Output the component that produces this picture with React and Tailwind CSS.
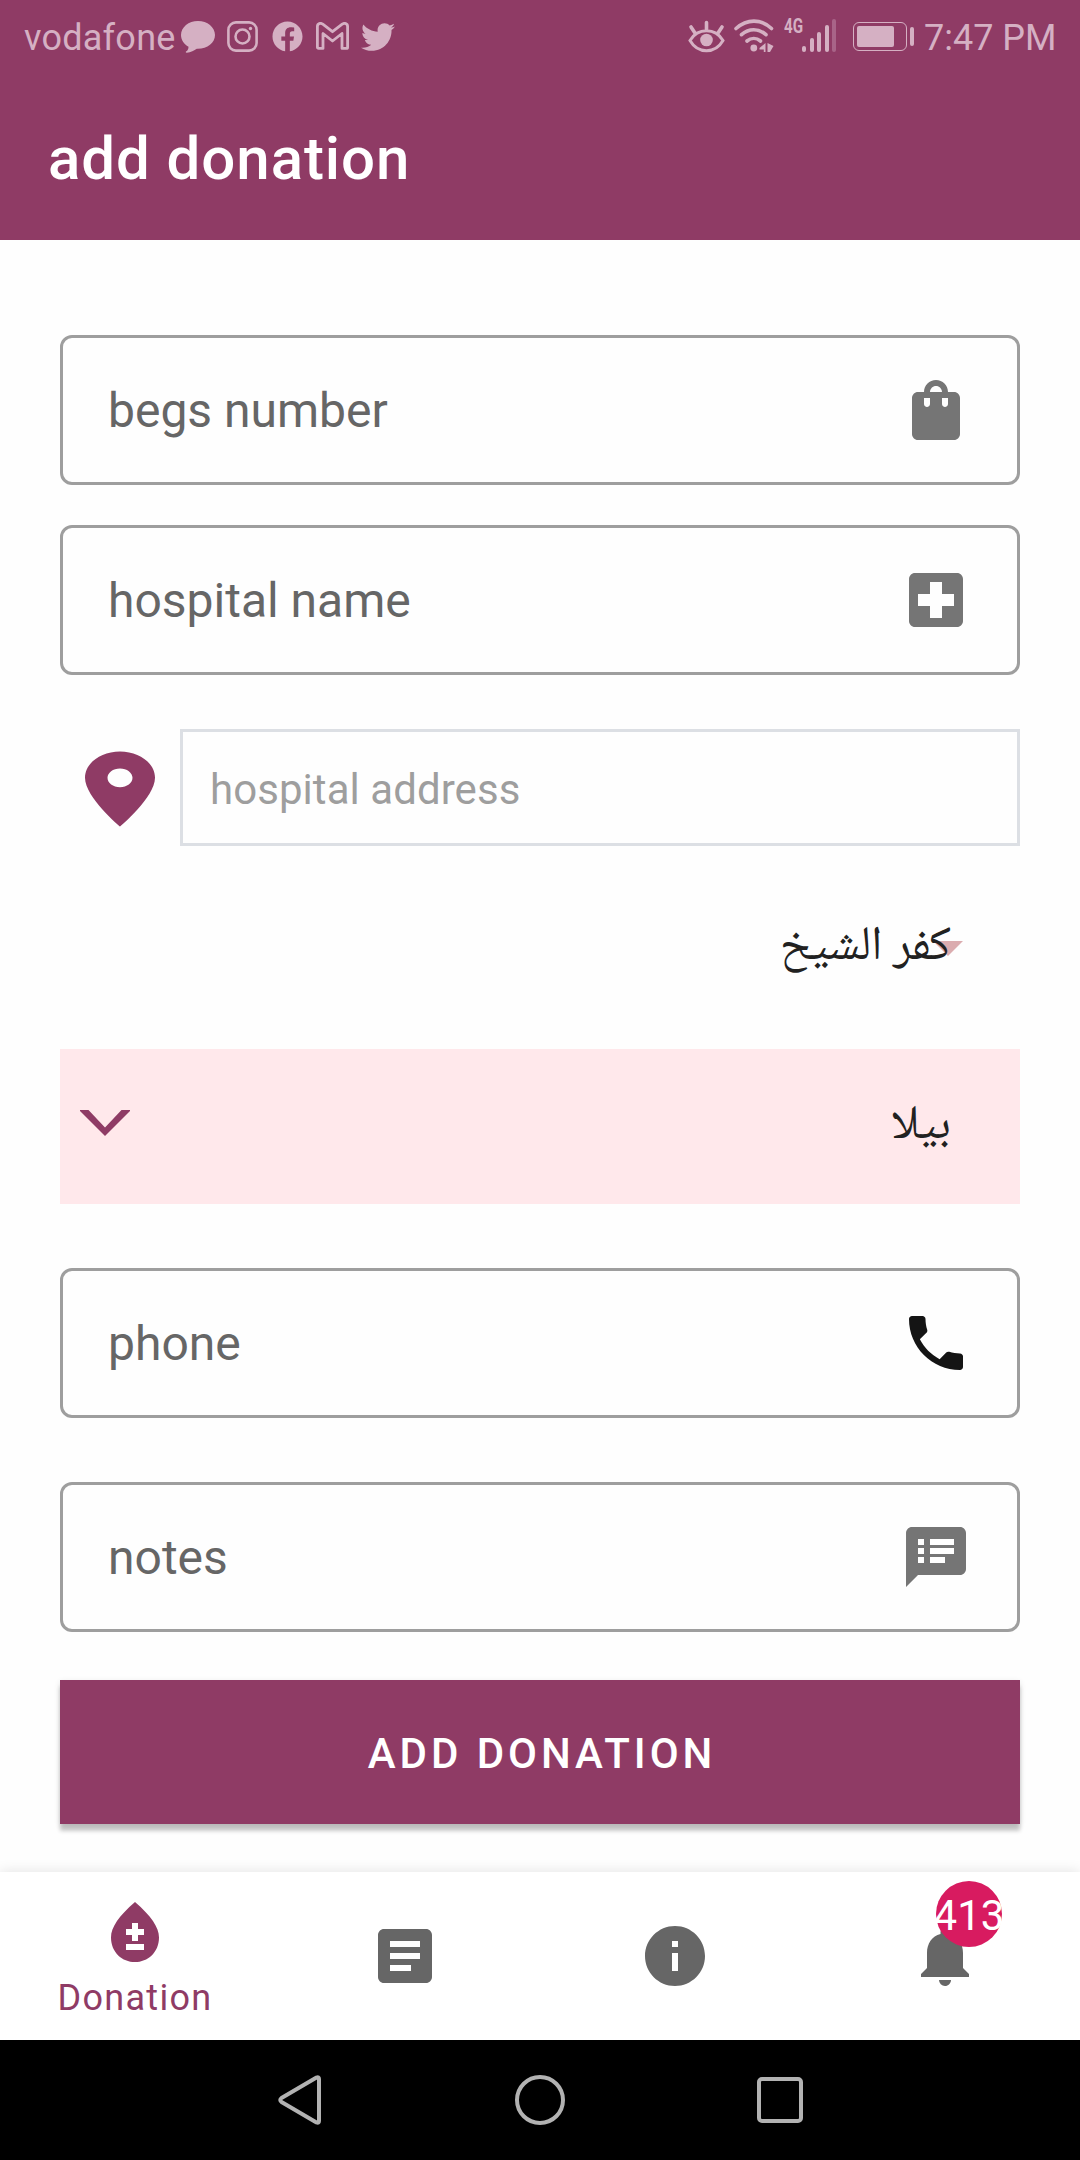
import {
  MdArticle,
  MdBloodtype,
  MdInfo,
  MdLocalHospital,
  MdNotifications,
  MdPhone,
  MdShoppingBag,
  MdSpeakerNotes,
} from "react-icons/md";
import { FaFacebook, FaTwitter } from "react-icons/fa";

function StatusBar() {
  return (
    <div className="flex h-[72px] items-start pl-[24px] text-[36px] leading-[76px] text-[#d5b0c3]">
      <span className="w-[157px] shrink-0 whitespace-nowrap tracking-[0.250px]">vodafone</span>
      <svg className="mt-[21px] h-[32px] w-[34px] shrink-0" viewBox="0 0 34 32" fill="currentColor">
        <path d="M17 0C7.600 0 0 6.200 0 14c0 5 3 9.300 7.500 11.800C7.500 28 6.800 29.600 5 30.500c-.5.600-.2 1.300.8 1.200 4-.4 7.500-2 10-3.900C26 28.200 34 22 34 14 34 6.200 26.400 0 17 0z" />
      </svg>
      <svg className="ml-[12px] mt-[21px] h-[31px] w-[31px] shrink-0" viewBox="0 0 31 31" fill="none" stroke="currentColor" strokeWidth="2.600">
        <rect x="1.400" y="1.400" width="28.200" height="28.200" rx="7.500" />
        <circle cx="15.500" cy="15.500" r="7" />
        <circle cx="23.500" cy="7.500" r="1.700" fill="currentColor" stroke="none" />
      </svg>
      <FaFacebook className="ml-[14px] mt-[21px] h-[31px] w-[31px] shrink-0" />
      <svg className="ml-[13px] mt-[22px] h-[28px] w-[33px] shrink-0" viewBox="0 0 33 28" fill="none" stroke="currentColor" strokeWidth="2.800" strokeLinejoin="round">
        <path d="M1.400 4.500C1.400 1.500 4.600.5 6.800 2.200L16.500 9.700 26.200 2.200C28.400.5 31.600 1.500 31.600 4.500V25.200Q31.600 26.400 30.400 26.400H26V11.500L16.500 19 7 11.500V26.400H2.600Q1.400 26.400 1.400 25.200Z" />
      </svg>
      <FaTwitter className="ml-[12px] mt-[20px] h-[34px] w-[34px] shrink-0" />

      <svg className="ml-[293px] mt-[20px] h-[33px] w-[37px] shrink-0" viewBox="0 0 37 33" fill="none" stroke="currentColor" strokeWidth="3" strokeLinecap="round">
        <path d="M2 20.500C6 14 12 10.800 18.500 10.800S31 14 35 20.500C31 27.500 25 30.700 18.500 30.700S6 27.500 2 20.500Z" />
        <circle cx="18.500" cy="20" r="6.300" fill="currentColor" stroke="none" />
        <path d="M18.500 2.500V9M3 7l4 6M34 7l-4 6" strokeWidth="3.600" />
      </svg>
      <svg className="ml-[9px] mt-[19px] h-[34px] w-[41px] shrink-0" viewBox="0 0 41 34" fill="none" stroke="currentColor" strokeWidth="3.600" strokeLinecap="round">
        <path d="M2 9.500C13-.4 27-.4 37.500 9.500M7.500 15.700C15 9 24.500 9 32 15.700M13 22C17 18.700 22.500 18.700 26.500 22" />
        <circle cx="19.800" cy="29" r="3.400" fill="currentColor" stroke="none" />
        <path d="M31.500 24V33H29.800V30.500H25.500V29Z M33.500 24L39.500 27 36 33H33.500Z" fill="currentColor" stroke="none" />
      </svg>
      <span className="ml-[9px] mt-[16px] w-[18px] shrink-0 origin-left scale-x-[0.76] text-[20px] font-bold leading-[21px]">4G</span>
      <div className="mt-[19px] flex h-[33px] shrink-0 items-end gap-[3.500px]">
        <div className="h-[6px] w-[4px] rounded-full bg-current" />
        <div className="h-[14px] w-[4px] rounded-full bg-current" />
        <div className="h-[20px] w-[4px] rounded-full bg-current" />
        <div className="h-[27px] w-[4px] rounded-full bg-current" />
        <div className="h-[33px] w-[4px] rounded-full bg-[#a86488]" />
      </div>
      <div className="ml-[17px] mt-[22px] h-[29px] w-[54px] shrink-0 rounded-[6px] border-[1.500px] border-current p-[3px]">
        <div className="h-full w-[37px] rounded-[2px] bg-current" />
      </div>
      <div className="ml-[3px] mt-[27px] h-[19px] w-[4px] shrink-0 rounded-full bg-current" />
      <span className="ml-[10px] whitespace-nowrap">7:47 PM</span>
    </div>
  );
}

function Field({ label, icon: Icon, className, iconClass }) {
  return (
    <label className={`flex h-[150px] shrink-0 items-center justify-between rounded-[12px] border-[3px] border-[#9e9e9e] pl-[45px] pr-[45px] ${className}`}>
      <span className="pt-[1px] text-[48px] leading-[56px] text-[#666666]">{label}</span>
      <Icon className={`h-[72px] w-[72px] ${iconClass}`} />
    </label>
  );
}

function BottomNav() {
  return (
    <nav className="grid h-[168px] shrink-0 grid-cols-4 bg-white text-[#666666] shadow-[0_-1px_12px_rgba(0,0,0,0.1)]">
      <div className="flex flex-col items-center pt-[24px] text-[#8f3b65]">
        <MdBloodtype className="h-[72px] w-[72px]" />
        <span className="mt-[9px] text-[36px] leading-[42px] tracking-[1.300px]">Donation</span>
      </div>
      <div className="flex items-center justify-center">
        <MdArticle className="h-[72px] w-[72px]" />
      </div>
      <div className="flex items-center justify-center">
        <MdInfo className="h-[72px] w-[72px]" />
      </div>
      <div className="relative flex items-center justify-center">
        <MdNotifications className="h-[72px] w-[72px]" />
        <div className="absolute left-[126px] top-[9px] flex h-[66px] w-[66px] items-center justify-center rounded-full bg-[#d81b60]">
          <span className="pt-[3px] text-[42px] leading-[49px] text-white">413</span>
        </div>
      </div>
    </nav>
  );
}

export default function App() {
  return (
    <div className="flex h-[2160px] w-[1080px] flex-col overflow-hidden bg-[#fefefe] font-['Roboto',sans-serif]">
      <header className="h-[240px] shrink-0 bg-[#8f3b65]">
        <StatusBar />
        <h1 className="pl-[48px] pt-[52px] text-[60px] font-medium leading-[70px] tracking-[0.930px] text-white">add donation</h1>
      </header>

      <main className="flex h-[1632px] shrink-0 flex-col px-[60px] pt-[95px]">
        <Field label="begs number" icon={MdShoppingBag} iconClass="text-[#757575]" className="" />
        <Field label="hospital name" icon={MdLocalHospital} iconClass="text-[#757575]" className="mt-[40px]" />

        <div className="mt-[54px] flex h-[117px] shrink-0 items-center">
          <svg className="mt-[2px] h-[90px] w-[120px] shrink-0" viewBox="0 0 24 24" preserveAspectRatio="none" fill="#8f3b65">
            <path d="M12 2C8.130 2 5 5.130 5 9c0 5.250 7 13 7 13s7-7.750 7-13c0-3.870-3.130-7-7-7zm0 9.500c-1.380 0-2.500-1.120-2.500-2.500s1.120-2.500 2.500-2.500 2.500 1.120 2.500 2.500-1.120 2.500-2.500 2.500z" />
          </svg>
          <div className="flex h-full flex-1 items-center border-[3px] border-[#dcdfe4] pl-[27px] pt-[4px] text-[42px] leading-[49px] tracking-[0.060px] text-[#9e9e9e]">
            hospital address
          </div>
        </div>

        <div dir="rtl" className="relative flex h-[203px] shrink-0 items-center pr-[69px]">
          <svg className="absolute right-[57px] top-[95px] h-[15px] w-[30px]" viewBox="0 0 30 15" fill="#dbacaf">
            <path d="M0 0H30L15 15Z" />
          </svg>
          <span className="relative pt-[3px] font-['Noto_Naskh_Arabic','DejaVu_Sans',sans-serif] text-[48px] leading-[60px] text-[#212121]">كفر الشيخ</span>
        </div>

        <div dir="rtl" className="flex h-[155px] shrink-0 items-center justify-between bg-[#ffe8eb] pl-[20px] pr-[69px]">
          <span className="pt-[3px] font-['Noto_Naskh_Arabic','DejaVu_Sans',sans-serif] text-[48px] leading-[60px] text-[#212121]">بيلا</span>
          <svg className="mb-[7px] h-[26px] w-[50px]" viewBox="0 0 50 26" fill="#8f3b65">
            <path d="M0 0H8.500L25 17.500 41.500 0H50V1L25 26 0 1Z" />
          </svg>
        </div>

        <Field label="phone" icon={MdPhone} iconClass="text-[#141414]" className="mt-[64px]" />
        <Field label="notes" icon={MdSpeakerNotes} iconClass="text-[#757575]" className="mt-[64px]" />

        <button className="mt-[48px] h-[144px] shrink-0 bg-[#8f3b65] pl-[4px] pt-[3px] text-[42px] font-medium leading-[49px] tracking-[3.950px] text-white shadow-[0_7px_4px_rgba(0,0,0,0.2),0_2px_6px_rgba(0,0,0,0.12)]">
          ADD DONATION
        </button>
      </main>

      <BottomNav />

      <div className="flex h-[120px] shrink-0 items-center bg-black pl-[278px]">
        <svg className="h-[50px] w-[44px]" viewBox="0 0 44 50" fill="none" stroke="#b2b2b2" strokeWidth="4" strokeLinejoin="round">
          <path d="M38.500 2.500Q41 1.500 41 4V46Q41 48.500 38.500 47.500L3.500 27Q1 25 3.500 23Z" />
        </svg>
        <div className="ml-[193px] h-[50px] w-[50px] rounded-full border-[4px] border-[#b2b2b2]" />
        <div className="ml-[192px] h-[46px] w-[46px] rounded-[5px] border-[4px] border-[#b2b2b2]" />
      </div>
    </div>
  );
}
